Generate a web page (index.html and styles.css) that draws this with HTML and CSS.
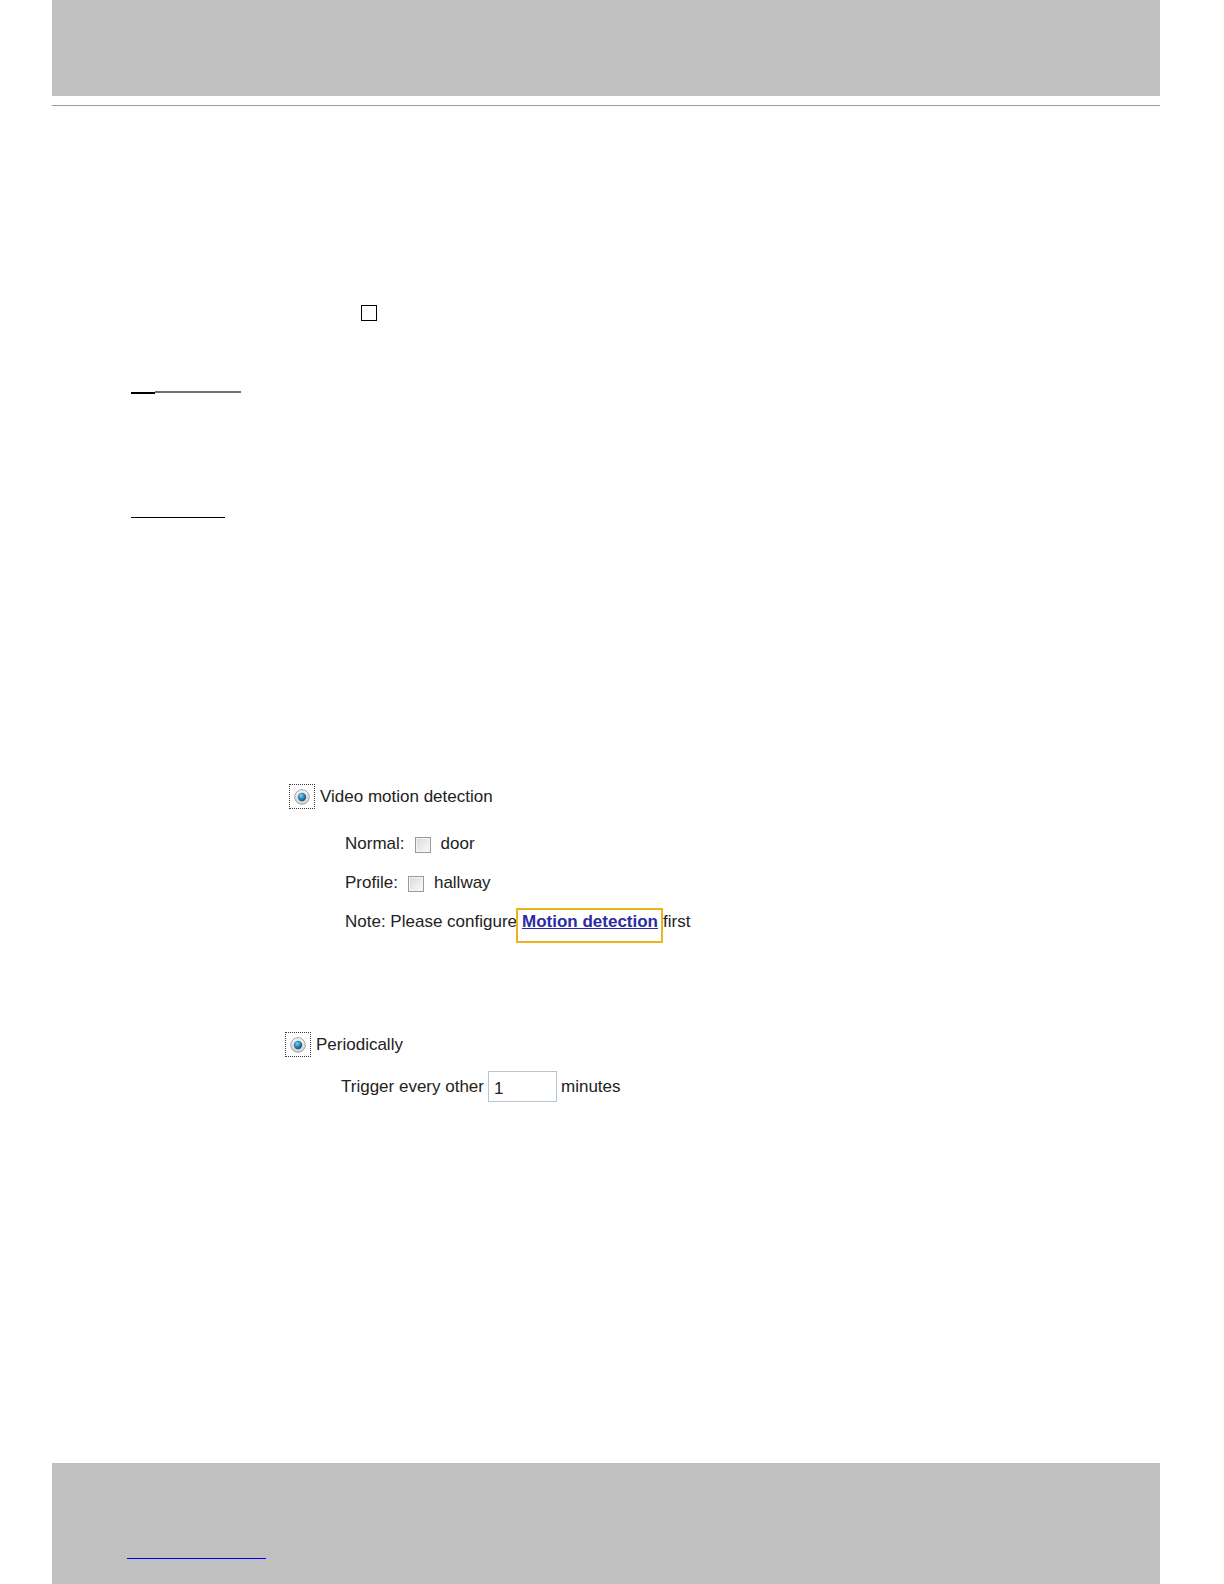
FILE: index.html
```html
<!DOCTYPE html>
<html lang="en">
<head>
<meta charset="utf-8">
<title>Event trigger</title>
<link rel="stylesheet" href="styles.css">
</head>
<body>
<div class="page">
  <div class="top-band"></div>
  <div class="top-rule"></div>

  <div class="empty-box"></div>

  <div class="split-rule">
    <span class="split-dark"></span><span class="split-gray"></span>
  </div>
  <div class="short-rule"></div>

  <div class="option option-motion">
    <div class="radio-row">
      <span class="radio-focus">
        <svg class="radio" width="16" height="16" viewBox="0 0 16 16">
          <defs>
            <linearGradient id="ring1" x1="0" y1="0" x2="0" y2="1">
              <stop offset="0" stop-color="#f6f6f6"/>
              <stop offset="1" stop-color="#cfcfcf"/>
            </linearGradient>
            <radialGradient id="dot1" cx="0.4" cy="0.35" r="0.7">
              <stop offset="0" stop-color="#8fd0f2"/>
              <stop offset="0.5" stop-color="#2a86bf"/>
              <stop offset="1" stop-color="#104a70"/>
            </radialGradient>
          </defs>
          <circle cx="8" cy="8" r="7.3" fill="url(#ring1)" stroke="#a4a4a4" stroke-width="1"/>
          <circle cx="8" cy="8" r="4.2" fill="url(#dot1)"/>
        </svg>
      </span>
      <span class="label">Video motion detection</span>
    </div>
    <div class="sub-rows">
      <div class="sub-row">
        <span>Normal:</span><span class="checkbox"></span><span>door</span>
      </div>
      <div class="sub-row">
        <span>Profile:</span><span class="checkbox"></span><span>hallway</span>
      </div>
      <div class="sub-row note">
        <span>Note: Please configure</span>
        <a class="config-link" href="#">Motion detection</a>
        <span>first</span>
      </div>
    </div>
  </div>

  <div class="option option-period">
    <div class="radio-row">
      <span class="radio-focus">
        <svg class="radio" width="16" height="16" viewBox="0 0 16 16">
          <defs>
            <linearGradient id="ring2" x1="0" y1="0" x2="0" y2="1">
              <stop offset="0" stop-color="#f6f6f6"/>
              <stop offset="1" stop-color="#cfcfcf"/>
            </linearGradient>
            <radialGradient id="dot2" cx="0.4" cy="0.35" r="0.7">
              <stop offset="0" stop-color="#8fd0f2"/>
              <stop offset="0.5" stop-color="#2a86bf"/>
              <stop offset="1" stop-color="#104a70"/>
            </radialGradient>
          </defs>
          <circle cx="8" cy="8" r="7.3" fill="url(#ring2)" stroke="#a4a4a4" stroke-width="1"/>
          <circle cx="8" cy="8" r="4.2" fill="url(#dot2)"/>
        </svg>
      </span>
      <span class="label">Periodically</span>
    </div>
    <div class="trigger-row">
      <span>Trigger every other</span>
      <input class="minutes-input" type="text" value="1">
      <span>minutes</span>
    </div>
  </div>

  <div class="bottom-band">
    <a class="footer-link" href="#"></a>
  </div>
</div>
</body>
</html>
```

FILE: styles.css
```css
html, body {
  margin: 0;
  padding: 0;
  background: #ffffff;
}

.page {
  width: 1224px;
  min-height: 1584px;
  display: flex;
  flex-direction: column;
  font-family: "Liberation Sans", Arial, sans-serif;
  font-size: 17px;
  color: #222222;
}

.top-band {
  height: 96px;
  margin: 0 64px 0 52px;
  background: #c0c0c0;
}

.top-rule {
  height: 1px;
  margin: 9px 64px 0 52px;
  background: #9a9a9a;
}

.empty-box {
  width: 14px;
  height: 14px;
  margin: 199px 0 0 361px;
  border: 1px solid #000000;
}

.split-rule {
  display: flex;
  margin: 71px 0 0 131px;
}

.split-dark {
  width: 24px;
  height: 2px;
  background: #000000;
}

.split-gray {
  width: 86px;
  height: 2px;
  margin-top: -1px;
  background: #6e6e6e;
}

.short-rule {
  width: 94px;
  height: 1px;
  margin: 123px 0 0 131px;
  background: #000000;
}

.option-motion {
  margin: 266px 0 0 289px;
}

.option-period {
  margin: 98px 0 0 285px;
}

.radio-row {
  display: flex;
  align-items: center;
  height: 25px;
}

.radio-focus {
  display: flex;
  align-items: center;
  justify-content: center;
  width: 24px;
  height: 23px;
  border: 1px dotted #3a3a3a;
}

.radio {
  display: block;
}

.label {
  margin-left: 5px;
  line-height: 24px;
}

.sub-rows {
  display: flex;
  flex-direction: column;
  gap: 15px;
  margin: 23px 0 0 56px;
}

.sub-row {
  display: flex;
  align-items: center;
  gap: 10px;
  height: 24px;
  line-height: 24px;
}

.checkbox {
  width: 14px;
  height: 14px;
  margin-top: 2px;
  border: 1px solid #9a9a9a;
  background: linear-gradient(135deg, #d6d6d6 0%, #ececec 55%, #fafafa 100%);
  box-shadow: inset 0 0 0 1px #f4f4f4;
}

.note {
  gap: 5px;
}

.config-link {
  position: relative;
  font-weight: bold;
  color: #2a2aa6;
  text-decoration: underline;
}

.config-link::after {
  content: "";
  position: absolute;
  left: -6px;
  top: -2px;
  width: 143px;
  height: 31px;
  border: 2px solid #ecb41c;
}

.trigger-row {
  display: flex;
  align-items: center;
  gap: 4px;
  margin: 14px 0 0 56px;
  height: 31px;
}

.minutes-input {
  box-sizing: border-box;
  width: 69px;
  height: 31px;
  margin: 0;
  padding: 4px 0 0 5px;
  border: 1px solid #b7c5d3;
  font-family: "Liberation Sans", Arial, sans-serif;
  font-size: 17px;
  color: #222222;
  background: #ffffff;
}

.bottom-band {
  margin: auto 64px 0 52px;
  height: 121px;
  padding: 95px 0 0 75px;
  box-sizing: border-box;
  background: #c0c0c0;
}

.footer-link {
  display: block;
  width: 139px;
  height: 1px;
  background: #0000ee;
}
```
